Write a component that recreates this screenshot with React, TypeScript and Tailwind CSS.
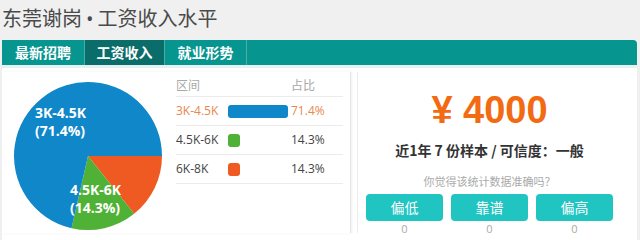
const rows = [
  { range: "3K-4.5K", pct: "71.4%", color: "bg-[#0f87c9]", width: "w-[60px]", active: true },
  { range: "4.5K-6K", pct: "14.3%", color: "bg-[#4fb236]", width: "w-[12px]", active: false },
  { range: "6K-8K", pct: "14.3%", color: "bg-[#ee5a22]", width: "w-[12px]", active: false },
];

const tabs = ["最新招聘", "工资收入", "就业形势"];

const cjk = { fontFamily: '"Noto Sans CJK SC", "Noto Sans", sans-serif' };
const latin = { fontFamily: '"Open Sans", "Noto Sans CJK SC", sans-serif' };

function Pie() {
  return (
    <svg width="150" height="150" viewBox="0 0 150 150" className="ml-[11px] mt-[9px] shrink-0">
      <path d="M75 75 L149 75 A74 74 0 0 1 121.14 132.85 Z" fill="#ee5a22" />
      <path d="M75 75 L121.14 132.85 A74 74 0 0 1 58.53 147.15 Z" fill="#4fb236" />
      <path d="M75 75 L58.53 147.15 A74 74 0 1 1 149 75 Z" fill="#0f87c9" />
      <g fill="#ffffff" fontFamily='"Open Sans", sans-serif' fontWeight="700" fontSize="14">
        <text x="22" y="37">3K-4.5K</text>
        <text x="22" y="55">(71.4%)</text>
        <text x="57" y="114">4.5K-6K</text>
        <text x="57" y="132">(14.3%)</text>
      </g>
    </svg>
  );
}

export default function App() {
  return (
    <div className="w-[640px] h-[240px] bg-[#f0f0f0] overflow-hidden" style={cjk}>
      <div className="h-[40px] pl-[2px] pt-[5px] text-[20px] leading-[26px] text-[#4a4a4a]">
        东莞谢岗<span className="mx-[4px]" style={latin}>•</span>工资收入水平
      </div>

      <div className="ml-[2px] mr-[3px] h-[25px] bg-[#07958f] rounded-tr-[4px] flex">
        {tabs.map((t, i) => (
          <div
            key={t}
            className={`${i === 1 ? "bg-[#0b6d6a] w-[80px]" : "w-[82px]"} ${i === 0 ? "w-[83px]" : ""} border-r border-[#4aaca7] flex items-center justify-center text-[14px] font-bold text-white`}
          >
            {t}
          </div>
        ))}
      </div>
      <div className="ml-[2px] mr-[3px] h-[3px] bg-[#e6f1f1]" />

      <div className="ml-[2px] mr-[3px] h-[172px] bg-white flex gap-[6px] pt-[4px]">
        <div className="w-[349px] h-[161px] border-r border-[#e4e4e4] shadow-[1px_0_3px_rgba(0,0,0,0.06)] flex items-start">
          <Pie />
          <div className="ml-[13px] mt-[1px] w-[167px] text-[12px]" style={latin}>
            <div className="h-[24px] border-b border-[#ececec] flex items-center text-[#a8a8a8]" style={cjk}>
              <span className="w-[115px]">区间</span>
              <span>占比</span>
            </div>
            {rows.map((r) => (
              <div key={r.range} className="h-[29px] border-b border-[#ececec] flex items-center">
                <span className={`w-[52px] ${r.active ? "text-[#e9874c]" : "text-[#444444]"}`}>{r.range}</span>
                <span className="w-[63px] flex">
                  <span className={`${r.width} h-[13px] rounded-[3px] ${r.color}`} />
                </span>
                <span className={r.active ? "text-[#e9874c]" : "text-[#444444]"}>{r.pct}</span>
              </div>
            ))}
          </div>
        </div>

        <div className="w-[280px] h-[161px] border-l border-[#ececec] pr-[16px] flex flex-col items-center">
          <div className="mt-[19px] h-[38px] text-[38px] leading-[38px] font-bold text-[#f26a12]" style={{ fontFamily: '"Liberation Sans", Arial, sans-serif' }}>
            ¥ 4000
          </div>
          <div className="mt-[11px] text-[14px] leading-[20px] font-bold text-[#333333]">
            近1年 7 份样本 / 可信度：一般
          </div>
          <div className="mt-[13px] text-[11px] leading-[16px] text-[#aaaaaa]">
            你觉得该统计数据准确吗？
          </div>
          <div className="mt-[5px] flex gap-[8px]">
            {["偏低", "靠谱", "偏高"].map((b) => (
              <div key={b} className="w-[77px] flex flex-col items-center">
                <div className="w-full h-[27px] rounded-[4px] bg-[#20c4c1] text-white text-[14px] flex items-center justify-center">
                  {b}
                </div>
                <div className="text-[11px] leading-[16px] text-[#aaaaaa]" style={latin}>0</div>
              </div>
            ))}
          </div>
        </div>
      </div>
    </div>
  );
}
